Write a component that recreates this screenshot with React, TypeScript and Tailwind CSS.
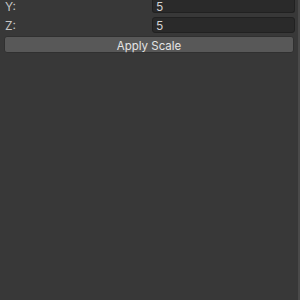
export default function App() {
  return (
    <div className="flex h-[300px] w-[300px] overflow-hidden bg-[#383838] font-['Inter',sans-serif]">
      <div className="flex flex-1 flex-col gap-[4px] pl-[4px] pr-[3px]">
        {/* Y row, scrolled partly out of view */}
        <div className="flex h-[13px] items-start">
          <span className="mt-[2px] w-[148px] pl-[1px] text-[12px] leading-[10px] text-[#c4c4c4]">Y:</span>
          <div className="flex h-[13px] flex-1 items-start rounded-b-[3px] border border-t-0 border-[#212121] bg-[#2a2a2a] pl-[3px] pt-[2px] text-[12px] leading-[10px] text-[#d2d2d2]">
            5
          </div>
        </div>
        <div className="flex h-[16px] items-center">
          <span className="w-[148px] pl-[1px] pt-[2px] text-[12px] leading-[10px] text-[#c4c4c4]">Z:</span>
          <div className="flex h-[16px] flex-1 items-center rounded-[3px] border border-[#212121] bg-[#2a2a2a] pl-[3px] pt-[2px] text-[12px] leading-[10px] text-[#d2d2d2]">
            5
          </div>
        </div>
        <button className="-mt-[1px] mr-[1px] flex h-[17px] items-center justify-center rounded-[3px] border border-[#303030] bg-[#585858] pt-[2px] text-[11.5px] leading-[10px] text-[#e4e4e4]">
          Apply Scale
        </button>
      </div>
      <div className="w-[2px] bg-[#4a4a4a]" />
    </div>
  );
}
